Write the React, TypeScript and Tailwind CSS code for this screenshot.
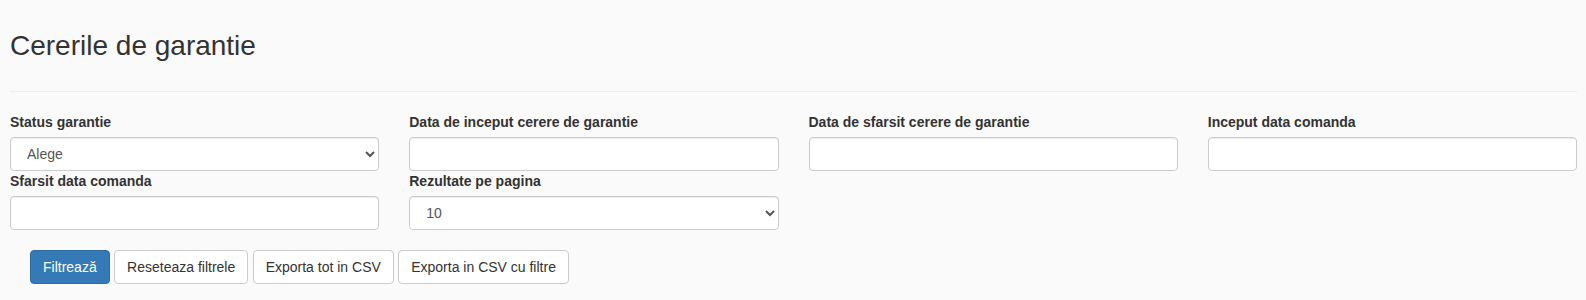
import React from "react";

const labelCls = "block text-[14px] leading-[20px] font-bold text-[#333] mb-[5px]";
const inputCls =
  "block w-full h-[34px] px-[12px] py-[6px] text-[14px] leading-[20px] text-[#555] bg-white border border-[#ccc] rounded-[4px] shadow-[inset_0_1px_1px_rgba(0,0,0,0.075)]";
const btnCls =
  "inline-block h-[34px] px-[12px] py-[6px] text-[14px] leading-[20px] rounded-[4px] border whitespace-nowrap";

function Field({ label, children }: { label: string; children: React.ReactNode }) {
  return (
    <div>
      <label className={labelCls}>{label}</label>
      {children}
    </div>
  );
}

export default function App() {
  return (
    <div
      className="w-[1586px] h-[300px] bg-[#fafafa] text-[#333] overflow-hidden"
      style={{ fontFamily: '"Liberation Sans", Arial, Helvetica, sans-serif' }}
    >
      <div className="pl-[10px] pr-[9px]">
        <h2 className="pt-[30px] text-[28px] leading-[31px] font-normal text-[#333]">Cererile de garantie</h2>
        <hr className="mt-[30px] mb-[20px] border-0 border-t border-[#eee]" />
        <div className="grid grid-cols-4 gap-x-[30px]">
          <Field label="Status garantie">
            <select className={inputCls} defaultValue="">
              <option value="">Alege</option>
            </select>
          </Field>
          <Field label="Data de inceput cerere de garantie">
            <input type="text" className={inputCls} />
          </Field>
          <Field label="Data de sfarsit cerere de garantie">
            <input type="text" className={inputCls} />
          </Field>
          <Field label="Inceput data comanda">
            <input type="text" className={inputCls} />
          </Field>
          <Field label="Sfarsit data comanda">
            <input type="text" className={inputCls} />
          </Field>
          <Field label="Rezultate pe pagina">
            <select className={inputCls} defaultValue="10">
              <option value="10">10</option>
            </select>
          </Field>
        </div>
        <div className="flex gap-[4.4px] mt-[20px] pl-[20px]">
          <button className={`${btnCls} bg-[#337ab7] border-[#2e6da4] text-white`}>Filtrează</button>
          <button className={`${btnCls} bg-white border-[#ccc] text-[#333]`}>Reseteaza filtrele</button>
          <button className={`${btnCls} bg-white border-[#ccc] text-[#333]`}>Exporta tot in CSV</button>
          <button className={`${btnCls} bg-white border-[#ccc] text-[#333]`}>Exporta in CSV cu filtre</button>
        </div>
      </div>
    </div>
  );
}
